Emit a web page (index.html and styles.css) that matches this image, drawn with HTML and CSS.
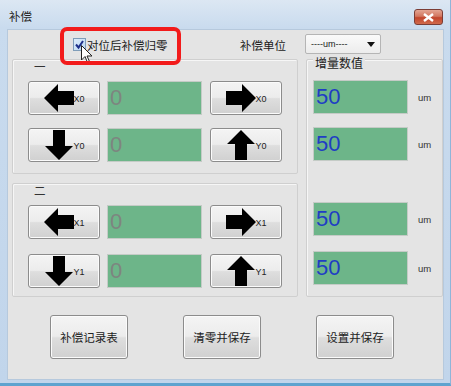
FILE: index.html
```html
<!DOCTYPE html>
<html lang="zh-CN">
<head>
    <meta charset="UTF-8">
    <title>补偿</title>
    <link rel="stylesheet" href="styles.css">
</head>
<body>
    <div class="window">
        <div class="titlebar">
            <span class="title">补偿</span>
            <button class="close-btn">
                <svg width="11" height="9" viewBox="0 0 11 9"><path d="M1 1 L10 8 M10 1 L1 8" stroke="#fff" stroke-width="2.4"/></svg>
            </button>
        </div>

        <div class="client">
            <div class="topbar">
                <label class="check">
                    <svg class="check-box" width="13" height="13" viewBox="0 0 13 13">
                        <defs>
                            <linearGradient id="cb" x1="0" y1="0" x2="1" y2="1">
                                <stop offset="0" stop-color="#dfeefb"/>
                                <stop offset="1" stop-color="#b8d6f2"/>
                            </linearGradient>
                        </defs>
                        <rect x="0.5" y="0.5" width="12" height="12" fill="url(#cb)" stroke="#7f9db9"/>
                        <path d="M3 6.5 L5.5 9.5 L10 3" fill="none" stroke="#1d2f8a" stroke-width="2"/>
                    </svg>
                    <span>对位后补偿归零</span>
                </label>
                <span class="unit-label">补偿单位</span>
                <div class="combo">
                    <span>----um----</span>
                    <svg width="8" height="5" viewBox="0 0 8 5"><path d="M0 0 H8 L4 5 Z" fill="#111"/></svg>
                </div>
            </div>

            <div class="main">
                <div class="col-left">
                    <div class="group">
                        <div class="group-label">一</div>
                        <div class="rows">
                            <div class="row">
                                <button class="arrow-btn">
                                    <svg width="30" height="30" viewBox="0 0 30 30"><path d="M0 15 L14 1 L14 8 L30 8 L30 22 L14 22 L14 29 Z"/></svg>
                                    <span>X0</span>
                                </button>
                                <div class="field zero">0</div>
                                <button class="arrow-btn">
                                    <svg width="30" height="30" viewBox="0 0 30 30"><path d="M30 15 L16 1 L16 8 L0 8 L0 22 L16 22 L16 29 Z"/></svg>
                                    <span>X0</span>
                                </button>
                            </div>
                            <div class="row">
                                <button class="arrow-btn">
                                    <svg width="30" height="30" viewBox="0 0 30 30"><path d="M15 30 L1 16 L9 16 L9 0 L21 0 L21 16 L29 16 Z"/></svg>
                                    <span>Y0</span>
                                </button>
                                <div class="field zero">0</div>
                                <button class="arrow-btn">
                                    <svg width="30" height="30" viewBox="0 0 30 30"><path d="M15 0 L1 14 L9 14 L9 30 L21 30 L21 14 L29 14 Z"/></svg>
                                    <span>Y0</span>
                                </button>
                            </div>
                        </div>
                    </div>

                    <div class="group">
                        <div class="group-label">二</div>
                        <div class="rows wide">
                            <div class="row">
                                <button class="arrow-btn">
                                    <svg width="30" height="30" viewBox="0 0 30 30"><path d="M0 15 L14 1 L14 8 L30 8 L30 22 L14 22 L14 29 Z"/></svg>
                                    <span>X1</span>
                                </button>
                                <div class="field zero">0</div>
                                <button class="arrow-btn">
                                    <svg width="30" height="30" viewBox="0 0 30 30"><path d="M30 15 L16 1 L16 8 L0 8 L0 22 L16 22 L16 29 Z"/></svg>
                                    <span>X1</span>
                                </button>
                            </div>
                            <div class="row">
                                <button class="arrow-btn">
                                    <svg width="30" height="30" viewBox="0 0 30 30"><path d="M15 30 L1 16 L9 16 L9 0 L21 0 L21 16 L29 16 Z"/></svg>
                                    <span>Y1</span>
                                </button>
                                <div class="field zero">0</div>
                                <button class="arrow-btn">
                                    <svg width="30" height="30" viewBox="0 0 30 30"><path d="M15 0 L1 14 L9 14 L9 30 L21 30 L21 14 L29 14 Z"/></svg>
                                    <span>Y1</span>
                                </button>
                            </div>
                        </div>
                    </div>
                </div>

                <div class="group group-right">
                    <div class="legend">增量数值</div>
                    <div class="rows">
                        <div class="step-row"><div class="field value">50</div><span class="unit">um</span></div>
                        <div class="step-row"><div class="field value">50</div><span class="unit">um</span></div>
                    </div>
                    <div class="rows wide lower">
                        <div class="step-row"><div class="field value">50</div><span class="unit">um</span></div>
                        <div class="step-row"><div class="field value">50</div><span class="unit">um</span></div>
                    </div>
                </div>
            </div>

            <div class="actions">
                <button class="btn">补偿记录表</button>
                <button class="btn">清零并保存</button>
                <button class="btn">设置并保存</button>
            </div>

            <!-- mouse pointer over the checkbox -->
            <svg class="cursor" width="12" height="19" viewBox="0 0 12 19">
                <path d="M0.5 0.5 L0.5 15 L4 11.5 L6.5 17.5 L8.5 16.5 L6 11 L11 11 Z" fill="#fff" stroke="#222" stroke-width="1"/>
            </svg>
        </div>

        <!-- red highlight frame -->
        <div class="highlight"></div>
    </div>
</body>
</html>
```

FILE: styles.css
```css
body {
    margin: 0;
    font-family: "Noto Sans CJK SC", "Liberation Sans", sans-serif;
    color: #1a1a1a;
    background-color: #c3d6eb;
}
.window {
    position: relative;
    width: 451px;
    height: 386px;
    box-sizing: border-box;
    background: linear-gradient(to bottom, #dce7f3, #c9dbee 28px, #c1d5eb);
    border-bottom: 3px solid #5ea3cf;
    border-right: 1px solid #8fb5d9;
    overflow: hidden;
}
.titlebar {
    height: 29px;
    display: flex;
    align-items: flex-start;
    padding: 0 7px 0 9px;
}
.title {
    margin-top: 8px;
    font-size: 11.5px;
    line-height: 16px;
    color: #222;
}
.close-btn {
    margin-left: auto;
    margin-top: 9px;
    width: 29px;
    height: 16px;
    padding: 0;
    display: flex;
    align-items: center;
    justify-content: center;
    border: 1px solid #7b3d35;
    border-radius: 3px;
    background: linear-gradient(to bottom, #e4a593, #d2765f 45%, #c2452c 55%, #d06a4c);
}
.client {
    position: relative;
    margin: 0 6px 0 7px;
    height: 351px;
    box-sizing: border-box;
    background-color: #e4e4e4;
    border: 1px solid #b6c9dd;
}
.topbar {
    height: 29px;
    display: flex;
    align-items: center;
    padding-left: 65px;
}
.check {
    width: 167px;
    display: flex;
    align-items: center;
    font-size: 11.5px;
}
.check-box {
    margin-right: 1px;
}
.unit-label {
    font-size: 11.5px;
}
.combo {
    margin-left: 19px;
    margin-top: -1px;
    width: 76px;
    height: 20px;
    box-sizing: border-box;
    display: flex;
    align-items: center;
    justify-content: space-between;
    padding: 0 5px 0 5px;
    border: 1px solid #b5b5b5;
    border-radius: 2px;
    background: linear-gradient(to bottom, #fafafa, #ececec);
    font-family: "Liberation Sans", sans-serif;
    font-size: 9px;
}
.main {
    display: flex;
    gap: 8px;
    padding-left: 4px;
    height: 238px;
}
.col-left {
    width: 286px;
    display: flex;
    flex-direction: column;
    gap: 9px;
}
.group {
    position: relative;
    flex: 1;
    box-sizing: border-box;
    border: 1px solid #cfcfcf;
    border-radius: 2px;
    box-shadow: inset 1px 1px 0 #f6f6f6;
    padding: 0 15px;
}
.group-label {
    height: 21px;
    font-size: 11.5px;
    line-height: 12px;
    padding-left: 6px;
    color: #333;
}
.rows {
    display: flex;
    flex-direction: column;
    gap: 13px;
}
.rows.wide {
    gap: 15px;
}
.row {
    display: flex;
    gap: 7px;
}
.arrow-btn {
    width: 72px;
    height: 34px;
    padding: 0 0 0 1px;
    display: flex;
    align-items: center;
    justify-content: center;
    border: 1px solid #8c8c8c;
    border-radius: 3px;
    background: linear-gradient(to bottom, #f4f4f4, #ececec 48%, #dedede 52%, #d0d0d0);
    box-shadow: inset 0 0 0 1px #fbfbfb;
}
.arrow-btn svg {
    fill: #000;
}
.arrow-btn span {
    width: 12px;
    font-family: "Liberation Sans", sans-serif;
    font-size: 9px;
    color: #222;
    text-align: left;
    margin-top: 2px;
}
.row .arrow-btn:last-child {
    margin-left: 1px;
}
.field {
    width: 95px;
    height: 34px;
    box-sizing: border-box;
    border: 1px solid #c4cbc6;
    background-color: #6db589;
    font-family: "Liberation Sans", sans-serif;
    font-size: 22px;
    line-height: 31px;
    padding-left: 2px;
}
.field.zero {
    color: #7d8580;
}
.field.value {
    color: #1f3dc4;
}
.group-right {
    flex: none;
    width: 137px;
    padding: 20px 6px 0 6px;
}
.legend {
    position: absolute;
    top: -4px;
    left: 6px;
    padding: 0 2px;
    background-color: #e4e4e4;
    font-size: 12px;
    line-height: 14px;
    color: #222;
}
.rows.lower {
    margin-top: 41px;
}
.step-row {
    display: flex;
    align-items: center;
}
.unit {
    margin-left: 10px;
    font-family: "Liberation Sans", sans-serif;
    font-size: 9.5px;
    color: #333;
}
.actions {
    display: flex;
    gap: 55px;
    padding: 18px 0 0 42px;
}
.btn {
    width: 78px;
    height: 44px;
    border: 1px solid #8c8c8c;
    border-radius: 3px;
    background: linear-gradient(to bottom, #f4f4f4, #ececec 48%, #dedede 52%, #d0d0d0);
    box-shadow: inset 0 0 0 1px #fbfbfb;
    font-family: "Noto Sans CJK SC", sans-serif;
    font-size: 11.5px;
    color: #222;
    padding: 0;
}
.cursor {
    position: absolute;
    left: 73px;
    top: 15px;
}
.highlight {
    position: absolute;
    left: 60px;
    top: 27px;
    width: 121px;
    height: 38px;
    box-sizing: border-box;
    border: 4px solid #f21b1b;
    border-radius: 7px;
}
```
